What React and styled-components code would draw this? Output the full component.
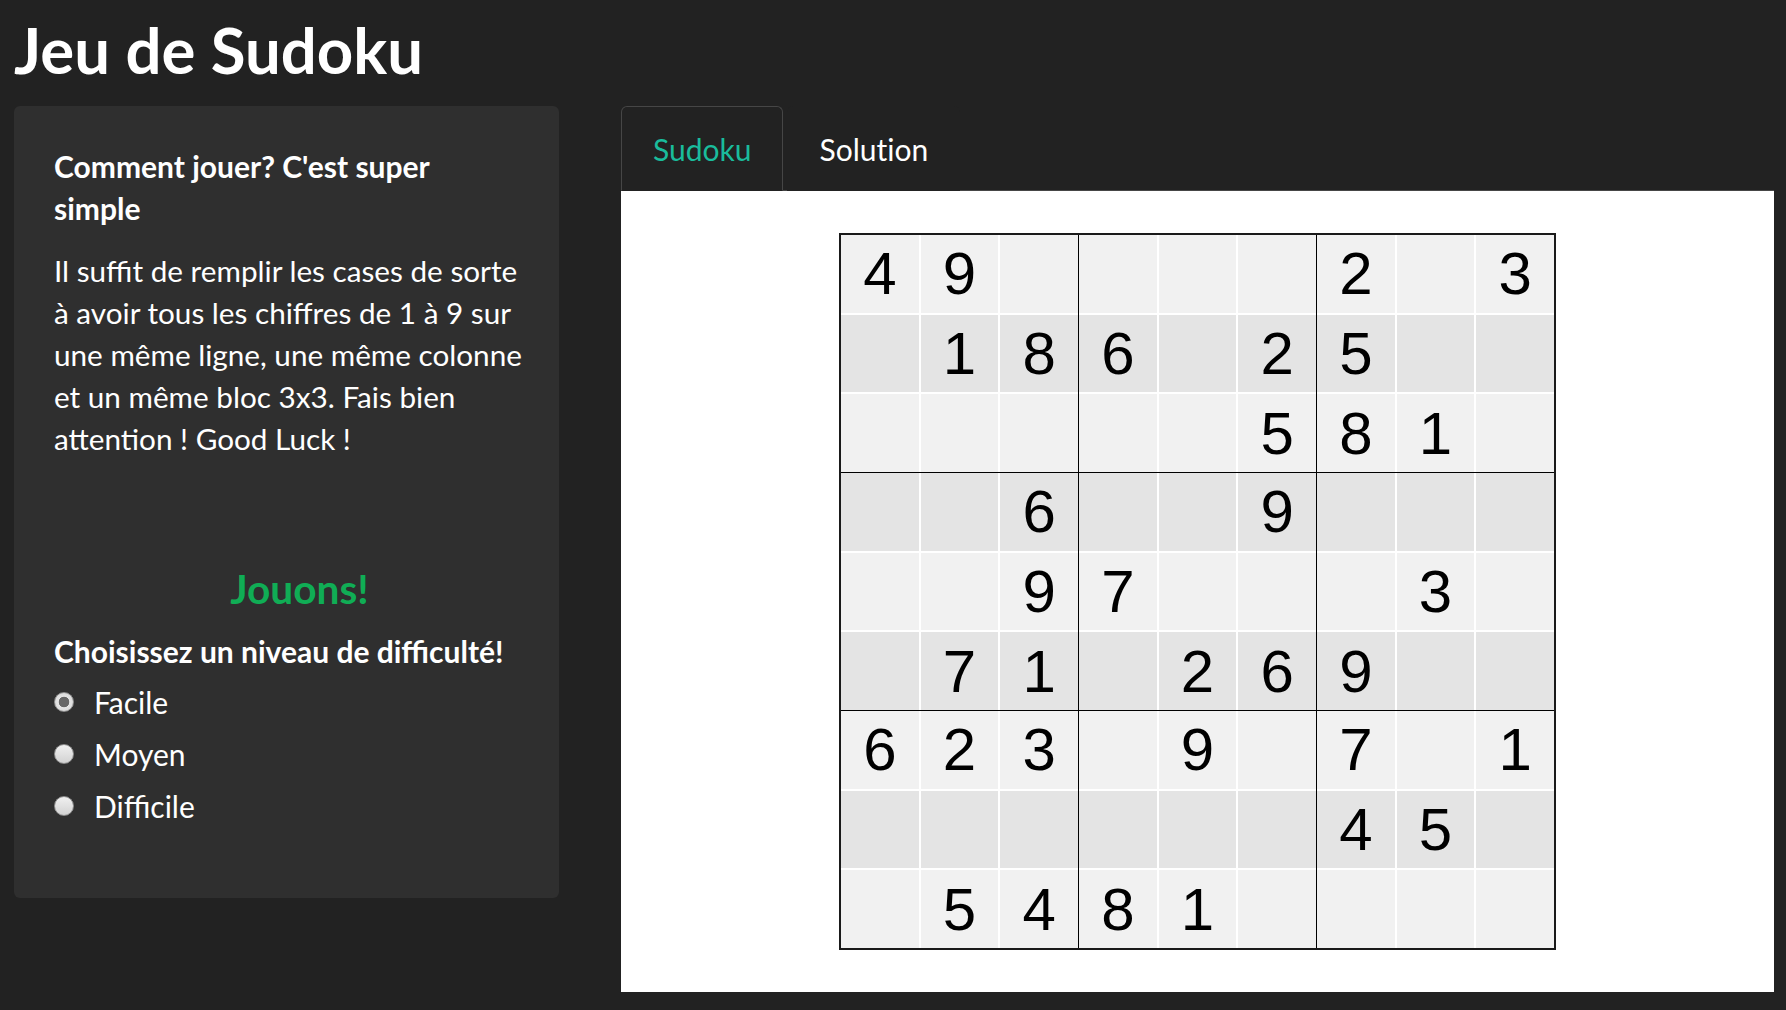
import React, { useState } from "react";
import styled, { createGlobalStyle } from "styled-components";

const puzzle = [
  [4, 9, 0, 0, 0, 0, 2, 0, 3],
  [0, 1, 8, 6, 0, 2, 5, 0, 0],
  [0, 0, 0, 0, 0, 5, 8, 1, 0],
  [0, 0, 6, 0, 0, 9, 0, 0, 0],
  [0, 0, 9, 7, 0, 0, 0, 3, 0],
  [0, 7, 1, 0, 2, 6, 9, 0, 0],
  [6, 2, 3, 0, 9, 0, 7, 0, 1],
  [0, 0, 0, 0, 0, 0, 4, 5, 0],
  [0, 5, 4, 8, 1, 0, 0, 0, 0],
];

const levels = ["Facile", "Moyen", "Difficile"];
const tabs = ["Sudoku", "Solution"];

const GlobalStyle = createGlobalStyle`
  body {
    margin: 0;
    background: #222222;
    font-family: "Lato", "Open Sans", sans-serif;
    color: #ffffff;
  }
`;

const Page = styled.div`
  padding: 11px 12px 18px 14px;
`;

const Title = styled.h1`
  margin: 0 0 18px;
  font-size: 63.5px;
  font-weight: 700;
  line-height: 77px;
`;

const Row = styled.div`
  display: flex;
  align-items: flex-start;
  gap: 62px;
`;

const Panel = styled.aside`
  flex: 0 0 545px;
  box-sizing: border-box;
  background: #2f2f2f;
  border-radius: 6px;
  padding: 39px 32px 41px 40px;
  font-size: 29.7px;
  line-height: 42px;
`;

const PanelTitle = styled.h3`
  margin: 0 0 21px;
  max-width: 430px;
  font-size: 30px;
  font-weight: 700;
`;

const Text = styled.p`
  margin: 0;
  font-weight: 400;
`;

const Play = styled.h2`
  margin: 105px 0 17px;
  padding-left: 18px;
  text-align: center;
  color: #10ad55;
  font-size: 40.6px;
  line-height: 48px;
  font-weight: 700;
`;

const Question = styled.h4`
  margin: 0 0 4px;
  font-size: 30px;
  font-weight: 700;
`;

const Options = styled.div`
  display: flex;
  flex-direction: column;
  margin-bottom: 25px;
`;

const Option = styled.label`
  display: flex;
  align-items: center;
  gap: 20px;
  height: 52px;
  line-height: 52px;
  font-size: 30px;
`;

const Radio = styled.input`
  appearance: none;
  margin: 0;
  width: 20px;
  height: 20px;
  border-radius: 50%;
  border: 1px solid #8e8e8e;
  box-sizing: border-box;
  background: linear-gradient(#f0f0f0, #d2d2d2);
  &:checked {
    background: radial-gradient(circle, #676767 0 5px, #e4e4e4 5.6px, #d0d0d0 100%);
  }
`;

const Main = styled.section`
  flex: 1;
  display: flex;
  flex-direction: column;
`;

const TabBar = styled.div`
  display: flex;
  gap: 4px;
  border-bottom: 1px solid #464646;
`;

const Tab = styled.button`
  height: 85px;
  margin-bottom: -1px;
  padding: 0 31px;
  background: #222222;
  border: 1px solid ${(p) => (p.$active ? "#464646" : "transparent")};
  border-bottom-color: ${(p) => (p.$active ? "#222222" : "transparent")};
  border-radius: 6px 6px 0 0;
  color: ${(p) => (p.$active ? "#1abc9c" : "#ffffff")};
  font-family: "Lato", sans-serif;
  font-size: 30px;
  font-variant-ligatures: no-common-ligatures;
  cursor: pointer;
`;

const Sheet = styled.div`
  background: #ffffff;
  padding: 42px 0;
  display: flex;
  justify-content: center;
`;

const Board = styled.div`
  width: 717px;
  height: 717px;
  box-sizing: border-box;
  border: 2px solid #1a1a1a;
  background: #000;
  display: grid;
  grid-template-columns: repeat(3, 1fr);
  grid-template-rows: repeat(3, 1fr);
  gap: 1px;
`;

const Block = styled.div`
  background: #ffffff;
  display: grid;
  grid-template-columns: repeat(3, 1fr);
  grid-template-rows: repeat(3, 1fr);
  gap: 2px;
`;

const Cell = styled.div`
  display: flex;
  align-items: center;
  justify-content: center;
  background: ${(p) => (p.$dark ? "#e4e4e4" : "#f1f1f1")};
  font-family: "Liberation Sans", Arial, sans-serif;
  font-size: 60px;
  color: #000;
`;

export default function App() {
  const [level, setLevel] = useState("Facile");
  const [tab, setTab] = useState("Sudoku");

  const blocks = [];
  for (let b = 0; b < 9; b++) {
    const br = Math.floor(b / 3) * 3;
    const bc = (b % 3) * 3;
    const cells = [];
    for (let i = 0; i < 9; i++) {
      const r = br + Math.floor(i / 3);
      const c = bc + (i % 3);
      const v = puzzle[r][c];
      cells.push(
        <Cell key={i} $dark={r % 2 === 1}>
          {v ? v : ""}
        </Cell>
      );
    }
    blocks.push(<Block key={b}>{cells}</Block>);
  }

  return (
    <Page>
      <GlobalStyle />
      <Title>Jeu de Sudoku</Title>
      <Row>
        <Panel>
          <PanelTitle>Comment jouer? C'est super simple</PanelTitle>
          <Text>
            Il suffit de remplir les cases de sorte à avoir tous les chiffres de
            1 à 9 sur une même ligne, une même colonne et un même bloc 3x3. Fais
            bien attention ! Good Luck !
          </Text>
          <Play>Jouons!</Play>
          <Question>Choisissez un niveau de difficulté!</Question>
          <Options>
            {levels.map((l) => (
              <Option key={l}>
                <Radio
                  type="radio"
                  name="level"
                  checked={level === l}
                  onChange={() => setLevel(l)}
                />
                {l}
              </Option>
            ))}
          </Options>
        </Panel>
        <Main>
          <TabBar>
            {tabs.map((t) => (
              <Tab key={t} $active={tab === t} onClick={() => setTab(t)}>
                {t}
              </Tab>
            ))}
          </TabBar>
          <Sheet>
            <Board>{blocks}</Board>
          </Sheet>
        </Main>
      </Row>
    </Page>
  );
}
